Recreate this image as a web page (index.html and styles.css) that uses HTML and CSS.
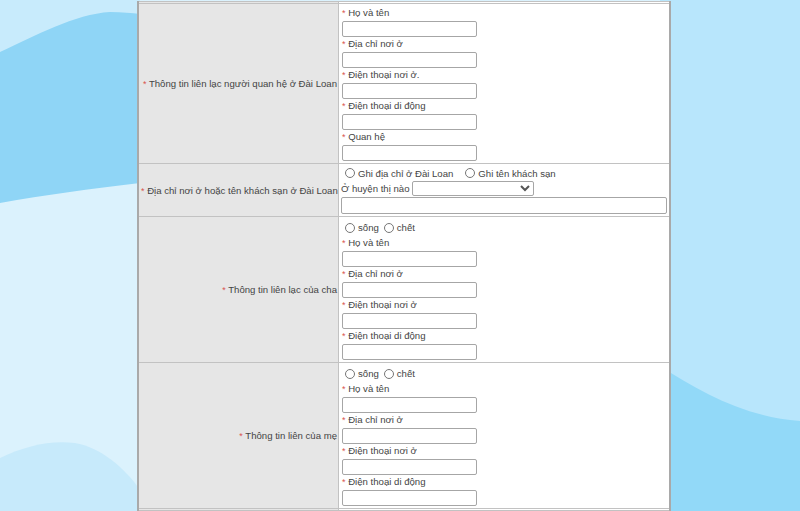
FILE: index.html
```html
<!DOCTYPE html>
<html lang="vi">
<head>
    <meta charset="UTF-8">
    <title>Tờ khai thị thực - Thông tin liên lạc</title>
    <link rel="stylesheet" href="styles.css">
</head>
<body>

    <!-- decorative wave background -->
    <svg class="bg" width="800" height="511" viewBox="0 0 800 511" aria-hidden="true">
        <rect x="0" y="0" width="800" height="511" fill="#dbf2fd"/>
        <rect x="0" y="0" width="140" height="80" fill="#c8ebfc"/>
        <path d="M0,52 C35,36 75,14 110,12 C122,12 132,13 140,14 L140,183 C90,189 45,195 0,203 Z" fill="#8fd5f6"/>
        <path d="M0,458 C25,446 50,440 75,443 C100,447 125,468 140,490 L140,511 L0,511 Z" fill="#c7eafb"/>
        <rect x="660" y="0" width="140" height="511" fill="#b8e6fc"/>
        <path d="M660,366 C700,392 745,417 800,421 L800,511 L660,511 Z" fill="#92d9f8"/>
    </svg>

    <table class="form-table">
        <tr class="row-cut">
            <td class="label"></td>
            <td class="field"></td>
        </tr>
        <tr>
            <td class="label"><span class="req">*</span> Thông tin liên lạc người quan hệ ở Đài Loan</td>
            <td class="field">
                <div class="item"><label><span class="req">*</span> Họ và tên</label><input type="text"></div>
                <div class="item"><label><span class="req">*</span> Địa chỉ nơi ở</label><input type="text"></div>
                <div class="item"><label><span class="req">*</span> Điện thoại nơi ở.</label><input type="text"></div>
                <div class="item"><label><span class="req">*</span> Điện thoại di động</label><input type="text"></div>
                <div class="item"><label><span class="req">*</span> Quan hệ</label><input type="text"></div>
            </td>
        </tr>
        <tr>
            <td class="label"><span class="req">*</span> Địa chỉ nơi ở hoặc tên khách sạn ở Đài Loan</td>
            <td class="field">
                <div class="radios">
                    <label class="radio"><input type="radio" name="stay"> Ghi địa chỉ ở Đài Loan</label>
                    <label class="radio wide"><input type="radio" name="stay"> Ghi tên khách sạn</label>
                </div>
                <div class="district">
                    <span>Ở huyện thị nào</span>
                    <select><option></option></select>
                </div>
                <input type="text" class="full">
            </td>
        </tr>
        <tr>
            <td class="label"><span class="req">*</span> Thông tin liên lạc của cha</td>
            <td class="field">
                <div class="radios status">
                    <label class="radio"><input type="radio" name="father"> sống</label>
                    <label class="radio"><input type="radio" name="father"> chết</label>
                </div>
                <div class="item"><label><span class="req">*</span> Họ và tên</label><input type="text"></div>
                <div class="item"><label><span class="req">*</span> Địa chỉ nơi ở</label><input type="text"></div>
                <div class="item"><label><span class="req">*</span> Điện thoại nơi ở</label><input type="text"></div>
                <div class="item"><label><span class="req">*</span> Điện thoại di động</label><input type="text"></div>
            </td>
        </tr>
        <tr>
            <td class="label"><span class="req">*</span> Thông tin liên của mẹ</td>
            <td class="field">
                <div class="radios status">
                    <label class="radio"><input type="radio" name="mother"> sống</label>
                    <label class="radio"><input type="radio" name="mother"> chết</label>
                </div>
                <div class="item"><label><span class="req">*</span> Họ và tên</label><input type="text"></div>
                <div class="item"><label><span class="req">*</span> Địa chỉ nơi ở</label><input type="text"></div>
                <div class="item"><label><span class="req">*</span> Điện thoại nơi ở</label><input type="text"></div>
                <div class="item"><label><span class="req">*</span> Điện thoại di động</label><input type="text"></div>
            </td>
        </tr>
        <tr class="row-cut">
            <td class="label"></td>
            <td class="field"></td>
        </tr>
    </table>

</body>
</html>
```

FILE: styles.css
```css
/* General Body Styles */
body {
    font-family: 'Liberation Sans', Arial, sans-serif;
    font-size: 9.6px;
    color: #444;
    margin: 0;
    width: 800px;
    height: 511px;
    overflow: hidden;
    position: relative;
    background: #dbf2fd;
}

/* Wave background */
.bg {
    position: absolute;
    left: 0;
    top: 0;
    z-index: 0;
}

/* Form Table */
.form-table {
    position: relative;
    z-index: 1;
    margin: 1px 0 0 137px;
    width: 534px;
    table-layout: fixed;
    border-collapse: collapse;
    border-left: 2px solid #a9a9a9;
    border-right: 2px solid #a9a9a9;
}

.form-table td {
    border-top: 1px solid #c2c2c2;
    border-bottom: 1px solid #c2c2c2;
    padding: 0;
}

.form-table .label {
    width: 199px;
    background-color: #e6e6e6;
    text-align: right;
    vertical-align: middle;
    padding: 0 1px 0 2px;
    border-right: 1px solid #c2c2c2;
    white-space: nowrap;
}

.form-table .field {
    background-color: #fff;
    vertical-align: top;
    padding: 2px 2px 2px 3px;
}

.form-table .row-cut td {
    height: 1px;
    padding: 0;
    font-size: 0;
    line-height: 0;
}

.req {
    color: #d9534f;
    font-size: 9px;
}

/* Label + input pairs */
.item label {
    display: block;
    height: 15px;
    line-height: 14px;
}

input[type="text"] {
    display: block;
    box-sizing: border-box;
    width: 135px;
    height: 16px;
    margin: 0;
    padding: 0 2px;
    border: 1px solid #a6a6a6;
    border-radius: 2px;
    font-size: 10px;
    background: #fff;
}

input.full {
    width: 326px;
    height: 17px;
    margin-left: -1px;
}

/* Radio groups */
.radios {
    display: flex;
    align-items: center;
    height: 14px;
    padding-left: 3px;
}

.radios.status {
    height: 17px;
}

.radio {
    display: flex;
    align-items: center;
    margin-right: 5px;
}

.radio.wide {
    margin-left: 7px;
}

.radio input {
    width: 10px;
    height: 10px;
    margin: 0 3px 0 0;
}

/* District select */
.district {
    display: flex;
    align-items: center;
    height: 17px;
    margin-left: -1px;
}

.district span {
    margin-right: 2px;
}

.district select {
    width: 122px;
    height: 15px;
    font-size: 9px;
    color: #555;
    padding: 0;
    border: 1px solid #a6a6a6;
    border-radius: 2px;
    background: #fff;
}
```
